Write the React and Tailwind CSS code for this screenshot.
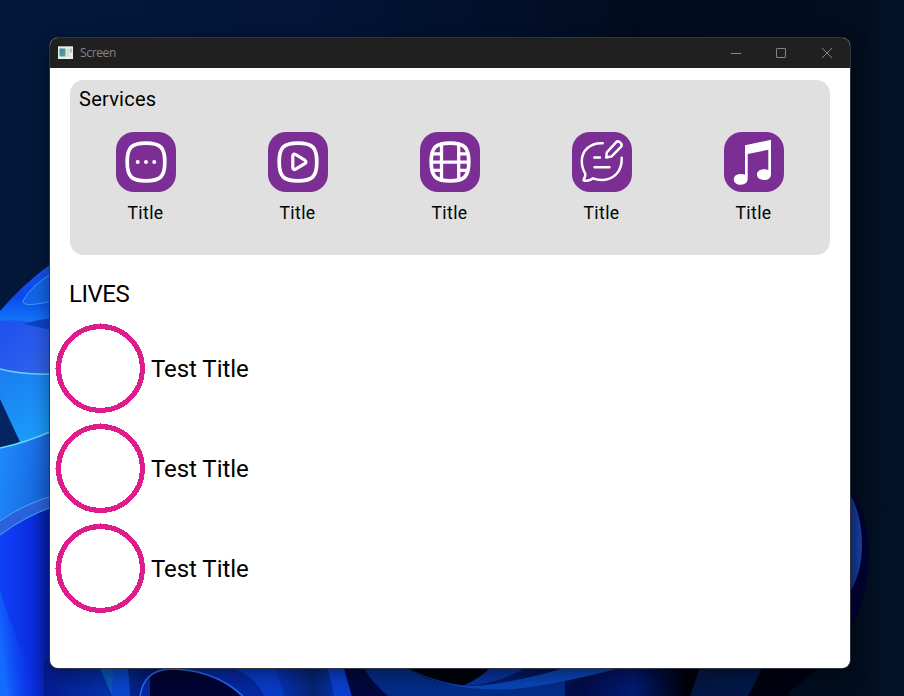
import React from "react";

function Wallpaper() {
  return (
    <svg className="absolute inset-0" width="904" height="696" viewBox="0 0 904 696">
      <defs>
        <linearGradient id="sky" x1="0" y1="0" x2="1" y2="0">
          <stop offset="0" stopColor="#03183a" />
          <stop offset="0.35" stopColor="#021536" />
          <stop offset="0.7" stopColor="#010c20" />
          <stop offset="0.95" stopColor="#020e1f" />
          <stop offset="1" stopColor="#03142a" />
        </linearGradient>
        <linearGradient id="petalA" x1="0" y1="0" x2="0" y2="1">
          <stop offset="0" stopColor="#1a55f0" />
          <stop offset="0.5" stopColor="#0d48ee" />
          <stop offset="1" stopColor="#1488fa" />
        </linearGradient>
        <linearGradient id="petalB" x1="0" y1="0" x2="1" y2="1">
          <stop offset="0" stopColor="#1d50f0" />
          <stop offset="1" stopColor="#3466e8" />
        </linearGradient>
        <linearGradient id="petalC" x1="0" y1="0" x2="0.3" y2="1">
          <stop offset="0" stopColor="#1c7cf2" />
          <stop offset="1" stopColor="#1a9cfa" />
        </linearGradient>
        <linearGradient id="petalD" x1="0" y1="0" x2="1" y2="0.3">
          <stop offset="0" stopColor="#1f8cff" />
          <stop offset="1" stopColor="#1762da" />
        </linearGradient>
        <linearGradient id="petalE" x1="0" y1="0" x2="1" y2="0">
          <stop offset="0" stopColor="#1040fa" />
          <stop offset="0.6" stopColor="#0a2ee0" />
          <stop offset="1" stopColor="#051c9a" />
        </linearGradient>
        <linearGradient id="glow" x1="0" y1="0.5" x2="1" y2="0.2">
          <stop offset="0" stopColor="#146cff" />
          <stop offset="0.6" stopColor="#0a38ea" stopOpacity="0" />
        </linearGradient>
        <linearGradient id="floor" x1="40" y1="0" x2="790" y2="0" gradientUnits="userSpaceOnUse">
          <stop offset="0" stopColor="#041a90" />
          <stop offset="0.09" stopColor="#0530a8" />
          <stop offset="0.18" stopColor="#020c58" />
          <stop offset="0.3" stopColor="#0738b0" />
          <stop offset="0.42" stopColor="#021058" />
          <stop offset="0.6" stopColor="#032070" />
          <stop offset="0.72" stopColor="#020c48" />
          <stop offset="0.79" stopColor="#021a72" />
          <stop offset="0.86" stopColor="#00020e" />
          <stop offset="1" stopColor="#01081a" />
        </linearGradient>
        <linearGradient id="blade" x1="0" y1="0" x2="1" y2="0">
          <stop offset="0" stopColor="#0832bc" />
          <stop offset="0.5" stopColor="#042472" />
          <stop offset="1" stopColor="#0a3cd0" />
        </linearGradient>
        <linearGradient id="rim" x1="0" y1="0" x2="1" y2="0">
          <stop offset="0" stopColor="#123080" />
          <stop offset="1" stopColor="#1842a8" />
        </linearGradient>
      </defs>
      <rect width="904" height="696" fill="url(#sky)" />

      <path d="M0 311 Q22 285 52 263 V330 H0Z" fill="url(#petalA)" />
      <path d="M52 273 Q29 288 23 301 Q22 308 52 301Z" fill="#1265ea" stroke="#3aa0ff" strokeWidth="1" />
      <path d="M0 321 Q30 318 52 328 V380 H0Z" fill="url(#petalB)" />
      <path d="M23 324 Q36 320 52 318 V330Z" fill="#0d43c8" />
      <path d="M0 369 Q22 374 52 374 V450 H0Z" fill="url(#petalC)" />
      <path d="M0 369 Q22 375 52 374" fill="none" stroke="#68d3f4" strokeWidth="1.5" />
      <path d="M0 399 L20 442 L0 450Z" fill="#052463" />
      <path d="M0 448 Q25 443 52 431 V500 L0 532Z" fill="url(#petalD)" />
      <path d="M0 448 Q25 443 52 431" fill="none" stroke="#5fd8f4" strokeWidth="1.6" />
      <path d="M0 530 Q24 510 52 500 V696 H0Z" fill="url(#petalE)" />
      <path d="M0 521 Q24 504 52 496 V507 Q24 517 0 535Z" fill="#2b62dc" />
      <path d="M0 521 Q24 504 52 496 M0 535 Q24 517 52 507" fill="none" stroke="#49a9f4" strokeWidth="1" />
      <path d="M0 590 Q18 650 46 696 H0Z" fill="url(#glow)" />

      <rect x="44" y="660" width="746" height="36" fill="url(#floor)" />
      <path d="M100 668 H128 L130 696 H112Z" fill="#0a58b8" />
      <path d="M113 668 H127 L130 696 H112Z" fill="#0846cc" />
      <path d="M140 696 Q144 670 170 668 H236 Q255 678 264 696Z" fill="#0528a2" />
      <path d="M150 696 V676 Q165 668 188 670 Q225 679 240 696Z" fill="#020434" />
      <path d="M140 696 Q144 670 170 669 Q214 669 243 696" fill="none" stroke="#286bea" strokeWidth="1.5" />
      <path d="M233 668 Q256 677 264 696 H284 Q282 680 275 668Z" fill="#083cc8" />
      <path d="M275 668 H344 L352 696 H284Z" fill="url(#blade)" />
      <path d="M328 668 H343 L351 696 H334Z" fill="#0b3fce" />
      <path d="M364 668 Q370 681 388 696 H565 V680 Q480 694 407 668Z" fill="#032c87" />
      <path d="M364 668 Q370 681 388 696 H352 L344 668Z" fill="#02083e" />
      <path d="M407 668 H525 Q500 684 463 686 Q430 683 407 668Z" fill="#01040e" />
      <path d="M490 668 H525 Q500 684 463 686 Q480 678 490 668Z" fill="#0a32a0" />
      <path d="M407 668 Q450 693 515 689 Q560 684 620 668 H564 Q525 680 480 686 Q445 687 407 668Z" fill="#0b44b8" />
      <path d="M700 668 H762 L748 696 H690Z" fill="#04215e" opacity="0.7" />
      <path d="M762 668 Q759 684 748 696 H784 Q800 684 818 668Z" fill="#000210" />

      <path d="M850 490 Q868 515 869 550 Q868 600 850 628Z" fill="#010330" />
      <path d="M850 494 Q862 515 862 546 Q862 572 850 592Z" fill="url(#rim)" />
    </svg>
  );
}

const SQUIRCLE = "M30 11.2C44.5 11.2 48.8 15.5 48.8 30S44.5 48.8 30 48.8 11.2 44.5 11.2 30 15.5 11.2 30 11.2Z";

const ICONS = {
  more: (
    <>
      <path d={SQUIRCLE} strokeWidth="3.7" />
      <g fill="#fff" stroke="none">
        <circle cx="21.7" cy="30" r="2" />
        <circle cx="30" cy="30" r="2" />
        <circle cx="38.2" cy="30" r="2" />
      </g>
    </>
  ),
  play: (
    <>
      <path d={SQUIRCLE} strokeWidth="3.7" />
      <path d="M24.8 24C24.8 22 26.2 21.6 27.6 22.5L36.8 28.2Q39.2 29.9 36.8 31.6L27.6 37.2C26.2 38 24.8 37.5 24.8 35.6Z" strokeWidth="3.2" />
    </>
  ),
  film: (
    <>
      <path d={SQUIRCLE} strokeWidth="3.7" />
      <path d="M21.5 12V48M38.7 12V48" strokeWidth="3.3" />
      <path d="M12 30.2H48M13 21.8H21M13 38.4H21M39 21.8H47M39 38.4H47" strokeWidth="3.3" />
    </>
  ),
  chat: (
    <>
      <path d="M30.7 11.2C18 10.4 9.8 19 9.8 29C9.8 34 11.2 38.2 13.2 41.5C14 44.2 12 46.2 11.6 48.2C14 49.8 18.5 48.2 21 46.3C24 47.5 27.5 48.2 31 48C42.5 47.2 50.2 38.8 49.7 25.8" strokeWidth="2.5" />
      <path d="M34.3 25.5L34.8 20.3L44.2 10.2C46.6 7.8 51.4 12 48.9 14.8L39.4 24.6Z" strokeWidth="2.5" />
      <path d="M22.3 25.5H28M22.5 35.3H37.5" strokeWidth="2.4" />
    </>
  ),
  music: (
    <g fill="#fff" stroke="none">
      <path d="M21 13.3L47 7.7V42C47 46 44.2 48 40.2 48C35.8 48 33 45.9 33 42.8C33 39 36.2 37.3 40.4 37.3Q42.6 37.4 44.3 38V17.8L23.7 22V46.5C23.7 50.4 21 52.7 16.8 52.7C12.7 52.7 9.8 50.5 9.8 47.4C9.8 43.8 13 42 17.2 42Q19.4 42.1 21 42.8Z" />
    </g>
  ),
};

function Service({ icon }) {
  return (
    <div className="flex flex-1 flex-col items-center">
      <svg
        className="size-[60px] rounded-[18px] bg-[#7b2e93]"
        viewBox="0 0 60 60"
        fill="none"
        stroke="#fff"
        strokeLinecap="round"
        strokeLinejoin="round"
      >
        {ICONS[icon]}
      </svg>
      <span className="mt-[9px] -ml-[1px] text-[17.6px] leading-6 tracking-[0.4px]">Title</span>
    </div>
  );
}

function Live() {
  return (
    <li className="flex h-[100px] items-center pl-[5px]">
      <svg width="91" height="91" viewBox="0 0 91 91" shapeRendering="crispEdges">
        <circle cx="45.5" cy="45.5" r="42" fill="none" stroke="#df1c8c" strokeWidth="5.1" />
        <path d="M0 45h2v1H0zM45 0h1v2h-1z" fill="#df1c8c" />
      </svg>
      <span className="ml-[5px] mt-[2px] text-[24px] leading-7 tracking-[-0.05px]">Test Title</span>
    </li>
  );
}

function TitleBar() {
  return (
    <header className="flex h-[30px] items-center bg-[#202020] pl-2">
      <svg className="-mt-[2px]" width="15" height="13" viewBox="0 0 15 13">
        <defs>
          <linearGradient id="appIcon" x1="0" y1="0" x2="1" y2="1">
            <stop stopColor="#367fb4" />
            <stop offset="1" stopColor="#55b37c" />
          </linearGradient>
        </defs>
        <rect width="15" height="13" fill="#ececec" />
        <rect width="15" height="1" fill="#aaa" />
        <rect x="1.5" y="2.5" width="6" height="8" fill="url(#appIcon)" />
        <rect x="8.5" y="2.5" width="3" height="8" fill="#d8d8d8" />
        <path d="M12 2.5h2V6l-2 1z" fill="#9dccb5" />
      </svg>
      <span className="ml-[7px] font-['Open_Sans','Noto_Sans',sans-serif] text-[12px] leading-4 tracking-[-0.35px] text-[#858585]">Screen</span>
      <svg className="ml-auto mr-[17px]" width="103" height="12" viewBox="0 0 103 12" fill="none" stroke="#858585">
        <path d="M1 6.5h10" />
        <rect x="46.5" y="1.5" width="9" height="9" rx="0.5" />
        <path d="M92 1l10 10M102 1L92 11" />
      </svg>
    </header>
  );
}

export default function App() {
  return (
    <div className="relative h-[696px] w-[904px] overflow-hidden font-[Roboto,sans-serif] text-black">
      <Wallpaper />
      <main className="absolute left-[50px] top-[38px] h-[630px] w-[800px] overflow-hidden rounded-lg bg-white shadow-[0_0_0_1px_#2f3440,0_6px_20px_rgba(0,0,0,0.45)]">
        <TitleBar />
        <section className="mx-5 mt-3 h-[175px] rounded-[14px] bg-[#e0e0e0] pt-[7px]">
          <h2 className="ml-[9px] text-[20px] leading-6 tracking-[0.25px]">Services</h2>
          <div className="mt-[21px] flex">
            <Service icon="more" />
            <Service icon="play" />
            <Service icon="film" />
            <Service icon="chat" />
            <Service icon="music" />
          </div>
        </section>
        <h2 className="ml-[19px] mt-[25px] text-[24px] leading-7 tracking-[-0.5px]">LIVES</h2>
        <ul className="mt-[10px]">
          <Live />
          <Live />
          <Live />
        </ul>
      </main>
    </div>
  );
}
